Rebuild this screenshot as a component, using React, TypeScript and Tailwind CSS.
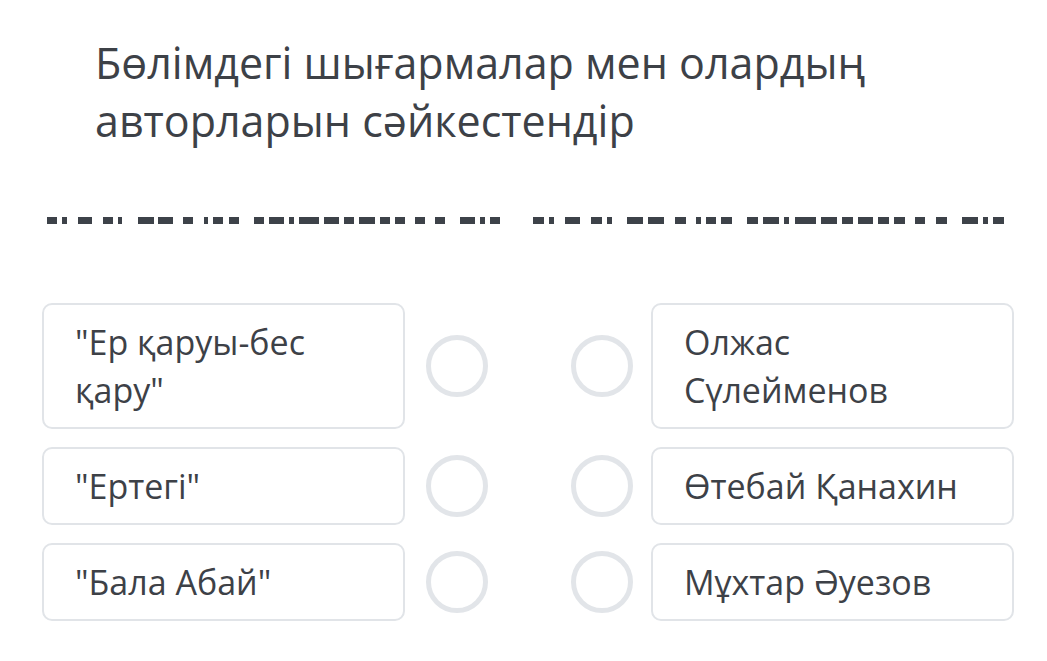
const leftDashes: [number, number][] = [
  [47, 10], [62, 5], [78, 14], [103, 10], [118, 4], [138, 16], [158, 15], [183, 10],
  [204, 4], [213, 10], [229, 10], [254, 10], [269, 15], [289, 5], [299, 20], [324, 15],
  [344, 10], [359, 16], [380, 10], [395, 10], [415, 10], [435, 10], [460, 15], [480, 5],
  [490, 10],
];

const rightDashes: [number, number][] = [
  [533, 11], [549, 5], [565, 15], [591, 11], [607, 5], [627, 16], [648, 16], [675, 11],
  [696, 5], [706, 10], [721, 11], [747, 11], [763, 16], [784, 5], [795, 21], [821, 16],
  [842, 11], [858, 15], [878, 11], [894, 11], [915, 10], [936, 11], [962, 16], [983, 5],
  [993, 11],
];

const rows = [
  { left: ['"Ер қаруы-бес', 'қару"'], right: ['Олжас', 'Сүлейменов'] },
  { left: ['"Ертегі"'], right: ['Өтебай Қанахин'] },
  { left: ['"Бала Абай"'], right: ['Мұхтар Әуезов'] },
];

function Card({ lines }: { lines: string[] }) {
  return (
    <div className="w-[363px] rounded-[10px] border-2 border-[#e1e4e8] bg-white px-[31px] py-[13px] text-[34px] leading-[48px] text-[#3d4147]">
      {lines.map((l, i) => (
        <div key={i} className="whitespace-nowrap">
          {l}
        </div>
      ))}
    </div>
  );
}

function Dot() {
  return <div className="h-[62px] w-[62px] shrink-0 rounded-full border-[5px] border-[#e2e5e9] bg-white" />;
}

export default function App() {
  return (
    <div
      className="h-[661px] w-[1047px] overflow-hidden bg-white"
      style={{ fontFamily: '"Open Sans", "Noto Sans", sans-serif' }}
    >
      <h1 className="pl-[95px] pt-[34px] text-[43px] font-normal leading-[58px] text-[#3d4147]">
        Бөлімдегі шығармалар мен олардың
        <br />
        авторларын сәйкестендір
      </h1>

      <svg width="1047" height="7" className="mt-[67px] block">
        {[...leftDashes, ...rightDashes].map(([x, w], i) => (
          <rect key={i} x={x} y={0} width={w} height={7} fill="#3d4249" />
        ))}
      </svg>

      <div className="mt-[79px] flex flex-col gap-[18px] pl-[42px]">
        {rows.map((r, i) => (
          <div key={i} className="flex items-center">
            <Card lines={r.left} />
            <div className="ml-[21px]">
              <Dot />
            </div>
            <div className="ml-[83px]">
              <Dot />
            </div>
            <div className="ml-[18px]">
              <Card lines={r.right} />
            </div>
          </div>
        ))}
      </div>
    </div>
  );
}
